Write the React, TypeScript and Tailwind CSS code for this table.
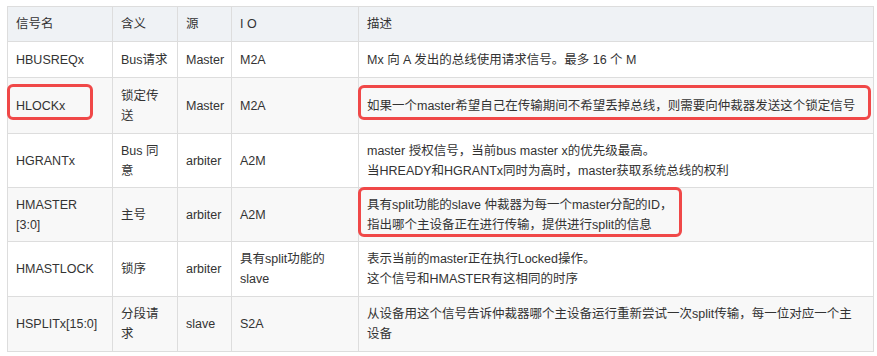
import React from 'react'

const rows = [
  { name: ['HBUSREQx'], mean: 'Bus请求', src: 'Master', io: ['M2A'], desc: ['Mx 向 A 发出的总线使用请求信号。最多 16 个 M'], h: 'h-[36px]' },
  { name: ['HLOCKx'], mean: '锁定传送', src: 'Master', io: ['M2A'], desc: ['如果一个master希望自己在传输期间不希望丢掉总线，则需要向仲裁器发送这个锁定信号'], h: 'h-[56px]' },
  { name: ['HGRANTx'], mean: 'Bus 同意', src: 'arbiter', io: ['A2M'], desc: ['master 授权信号，当前bus master x的优先级最高。', '当HREADY和HGRANTx同时为高时，master获取系统总线的权利'], h: 'h-[54px]' },
  { name: ['HMASTER', '[3:0]'], mean: '主号', src: 'arbiter', io: ['A2M'], desc: ['具有split功能的slave 仲裁器为每一个master分配的ID，', '指出哪个主设备正在进行传输，提供进行split的信息'], h: 'h-[54px]' },
  { name: ['HMASTLOCK'], mean: '锁序', src: 'arbiter', io: ['具有split功能的', 'slave'], desc: ['表示当前的master正在执行Locked操作。', '这个信号和HMASTER有这相同的时序'], h: 'h-[55px]' },
  { name: ['HSPLITx[15:0]'], mean: '分段请求', src: 'slave', io: ['S2A'], desc: ['从设备用这个信号告诉仲裁器哪个主设备运行重新尝试一次split传输，每一位对应一个主', '设备'], h: 'h-[55px]' },
]

const cell = 'border border-[#dddddd] px-2 align-middle'

export default function App() {
  return (
    <div className="w-[877px] h-[356px] bg-white pt-[6px] pl-[7px] relative text-[12.5px] leading-[20px] text-[#333333]" style={{ fontFamily: '"Liberation Sans", Arial, "Noto Sans CJK SC", sans-serif' }}>
      <table className="table-fixed border-collapse w-[866px]">
        <colgroup>
          <col className="w-[105px]" />
          <col className="w-[65px]" />
          <col className="w-[54px]" />
          <col className="w-[127px]" />
          <col className="w-[515px]" />
        </colgroup>
        <thead>
          <tr className="h-[35px] bg-[#eff2f5] text-left">
            <th className={cell + ' font-normal'}>信号名</th>
            <th className={cell + ' font-normal'}>含义</th>
            <th className={cell + ' font-normal'}>源</th>
            <th className={cell + ' font-normal'}>I O</th>
            <th className={cell + ' font-normal'}>描述</th>
          </tr>
        </thead>
        <tbody>
          {rows.map((r, i) => (
            <tr key={i} className={r.h + (i % 2 === 1 ? ' bg-[#f8f8f8]' : ' bg-white')}>
              <td className={cell}>{r.name.map((t, j) => <div key={j}>{t}</div>)}</td>
              <td className={cell}>{r.mean}</td>
              <td className={cell}>{r.src}</td>
              <td className={cell}>{r.io.map((t, j) => <div key={j}>{t}</div>)}</td>
              <td className={cell}>{r.desc.map((t, j) => <div key={j} className="whitespace-nowrap">{t}</div>)}</td>
            </tr>
          ))}
        </tbody>
      </table>

      {/* red highlight boxes */}
      <div className="absolute left-[7px] top-[84px] w-[86px] h-[36px] border-[3px] border-[#f04848] rounded-[6px]" />
      <div className="absolute left-[358px] top-[85px] w-[513px] h-[35px] border-[3px] border-[#f04848] rounded-[6px]" />
      <div className="absolute left-[358px] top-[187px] w-[324px] h-[50px] border-[3px] border-[#f04848] rounded-[6px]" />
    </div>
  )
}
